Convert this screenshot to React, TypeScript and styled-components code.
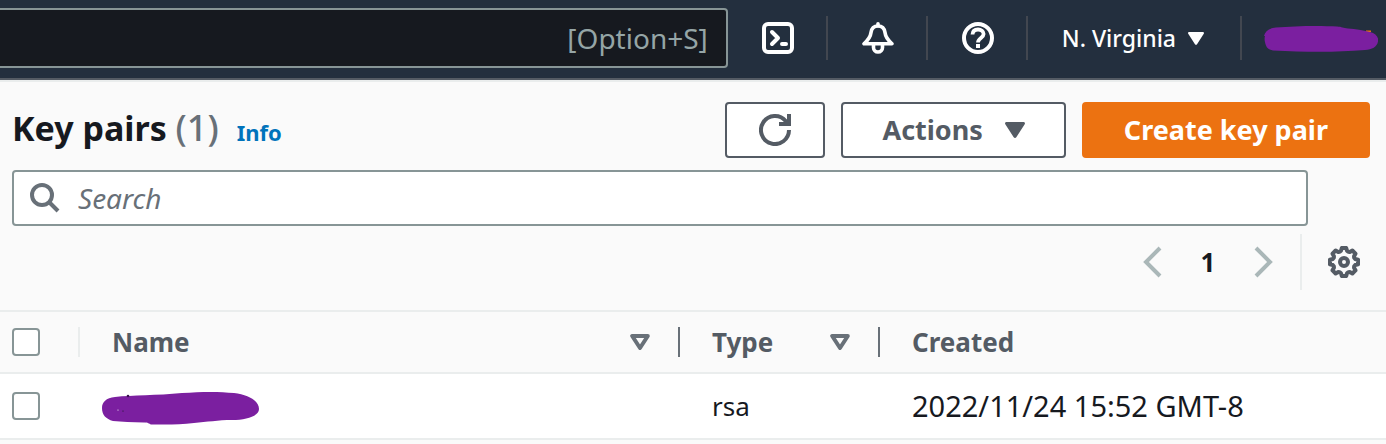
import React from "react";
import styled, { createGlobalStyle } from "styled-components";

const color = {
  ink: "#16191f",
  slate: "#545b64",
  grey: "#687078",
  line: "#879596",
  pale: "#aab7b8",
  rule: "#eaeded",
  navy: "#232f3e",
  page: "#fafafa",
  orange: "#ec7211",
  link: "#0073bb",
  mark: "#7b1fa0",
};

const GlobalStyle = createGlobalStyle`
  *, *::before, *::after { box-sizing: border-box; }
  body {
    margin: 0;
    background: ${color.page};
    color: ${color.ink};
    font-family: "Noto Sans", "Open Sans", sans-serif;
    font-size: 26px;
    line-height: 36px;
    overflow-x: hidden;
  }
  button, input { font: inherit; color: inherit; }
  button { cursor: pointer; }
  svg { display: block; flex: none; }
`;

const TopBar = styled.header`
  display: flex;
  align-items: center;
  height: 80px;
  background: ${color.navy};
  border-bottom: 2px solid ${color.slate};
  color: #fff;
`;

const GlobalSearch = styled.label`
  display: flex;
  flex: 1;
  align-items: center;
  min-width: 0;
  height: 60px;
  padding-right: 18px;
  margin-bottom: 2px;
  background: ${color.ink};
  border: 2px solid ${color.line};
  border-left: 0;
  border-radius: 0 4px 4px 0;
  color: #95a5a6;
  font-size: 28px;
`;

const GlobalInput = styled.input`
  flex: 1;
  min-width: 0;
  padding: 0;
  background: none;
  border: 0;
  outline: 0;
`;

const NavButton = styled.button<{ $kind?: "region" | "account" }>`
  display: flex;
  align-items: center;
  gap: 12px;
  height: 44px;
  margin-bottom: 2px;
  padding: 0 ${(p) => (p.$kind === "account" ? "8px 0 22px" : p.$kind === "region" ? "36px 0 34px" : "32px 0 34px")};
  background: none;
  border: 0;
  border-right: ${(p) => (p.$kind === "account" ? "0" : "2px solid #424750")};
  font-size: 23px;
  font-weight: 500;
  white-space: nowrap;
`;

const Panel = styled.main`
  border-top: 2px solid ${color.rule};
`;

const TitleRow = styled.div`
  display: flex;
  align-items: flex-start;
  justify-content: space-between;
  padding: 20px 16px 12px 12px;
`;

const Heading = styled.div`
  display: flex;
  align-items: baseline;
  gap: 18px;
`;

const Title = styled.h1`
  margin: 0;
  font-size: 34px;
  line-height: 52px;
  font-weight: 700;
`;

const Count = styled.span`
  color: ${color.grey};
  font-size: 36px;
  font-weight: 500;
`;

const InfoLink = styled.a`
  color: ${color.link};
  font-size: 22px;
  font-weight: 700;
  text-decoration: none;
`;

const Actions = styled.div`
  display: flex;
  gap: 16px;
`;

const Button = styled.button<{ $primary?: boolean; $pad?: number }>`
  display: flex;
  align-items: center;
  gap: 22px;
  height: 56px;
  padding: 0 ${(p) => p.$pad ?? 40}px;
  background: ${(p) => (p.$primary ? color.orange : "#fff")};
  border: 2px solid ${(p) => (p.$primary ? color.orange : color.slate)};
  border-radius: 4px;
  color: ${(p) => (p.$primary ? "#fff" : color.slate)};
  font-size: 27px;
  font-weight: 700;
  white-space: nowrap;
`;

const FilterBox = styled.label`
  display: flex;
  align-items: center;
  gap: 18px;
  height: 56px;
  margin: 0 78px 0 12px;
  padding: 0 16px;
  background: #fff;
  border: 2px solid ${color.line};
  border-radius: 4px;
  font-size: 28px;
`;

const FilterInput = styled.input`
  flex: 1;
  min-width: 0;
  padding: 0;
  background: none;
  border: 0;
  outline: 0;
  &::placeholder {
    color: ${color.grey};
    font-style: italic;
    opacity: 1;
  }
`;

const Pager = styled.nav`
  display: flex;
  align-items: center;
  justify-content: flex-end;
  height: 56px;
  margin: 8px 26px 20px 12px;
`;

const PageButton = styled.button<{ $current?: boolean }>`
  display: flex;
  align-items: center;
  justify-content: center;
  width: ${(p) => (p.$current ? 70 : 42)}px;
  padding: 0;
  background: none;
  border: 0;
  font-weight: 700;
`;

const SettingsButton = styled.button`
  display: flex;
  align-items: center;
  height: 56px;
  margin-left: 15px;
  padding: 0 0 0 26px;
  background: none;
  border: 0;
  border-left: 2px solid ${color.rule};
`;

const Table = styled.table`
  width: 100%;
  border-collapse: separate;
  border-spacing: 0;
  border-top: 2px solid ${color.rule};
  table-layout: fixed;
`;

const Column = styled.col<{ $width?: number }>`
  width: ${(p) => (p.$width ? `${p.$width}px` : "auto")};
`;

const HeadCell = styled.th`
  height: 62px;
  padding: 0;
  border-bottom: 2px solid ${color.rule};
  color: ${color.slate};
  text-align: left;
`;

const HeadInner = styled.div<{ $divider?: string; $pick?: boolean }>`
  display: flex;
  align-items: center;
  justify-content: space-between;
  height: 30px;
  padding: 0 28px 0 ${(p) => (p.$pick ? 12 : 32)}px;
  border-right: ${(p) => (p.$divider ? `2px solid ${p.$divider}` : "0")};
`;

const Cell = styled.td<{ $pick?: boolean; $date?: boolean }>`
  height: 66px;
  padding: 0 0 0 ${(p) => (p.$pick ? 12 : 32)}px;
  background: #fff;
  border-bottom: 2px solid ${color.rule};
  font-size: ${(p) => (p.$date ? 29 : 26)}px;
  white-space: nowrap;
`;

const CheckBox = styled.input`
  appearance: none;
  display: block;
  flex: none;
  width: 28px;
  height: 28px;
  margin: 0;
  background: #fff;
  border: 2px solid ${color.line};
  border-radius: 4px;
`;

const SortButton = styled.button`
  padding: 0;
  background: none;
  border: 0;
`;

const NameMark = styled.svg`
  margin-left: -10px;
`;

const Caret = ({ width = 20, height = 16 }: { width?: number; height?: number }) => (
  <svg width={width} height={height} viewBox="0 0 20 16" fill="currentColor" aria-hidden>
    <path d="M1.600 0h16.800c1.300 0 2 1.100 1.300 2.200L11.300 15.200c-.6 1-2 1-2.600 0L.3 2.200C-.4 1.100.3 0 1.600 0z" />
  </svg>
);

const SortIcon = () => (
  <svg width="20" height="16" viewBox="0 0 20 16" fill="none" stroke={color.grey} strokeWidth="4" strokeLinejoin="round" aria-hidden>
    <path d="M2.200 2h15.600L10 14z" />
  </svg>
);

const TerminalIcon = () => (
  <svg width="32" height="32" viewBox="0 0 32 32" fill="none" stroke="#fff" strokeWidth="4" strokeLinecap="round" strokeLinejoin="round" aria-hidden>
    <rect x="2" y="2" width="28" height="28" rx="4" />
    <path d="M10 10l6 6-6 6M20 22h4" />
  </svg>
);

const BellIcon = () => (
  <svg width="32" height="32" viewBox="0 0 32 32" fill="none" stroke="#fff" strokeWidth="3.600" strokeLinejoin="round" aria-hidden>
    <path d="M16 1.800v2" strokeLinecap="round" />
    <path d="M16 4c-4.500 0-6.500 2.800-7 6.500C8.500 15.500 6.200 18 2 21.800h28c-4.200-3.800-6.500-6.300-7-11.300-.5-3.700-2.500-6.500-7-6.500z" />
    <path d="M11.500 23v2.500a4.500 4.500 0 0 0 9 0V23" />
  </svg>
);

const HelpIcon = () => (
  <svg width="32" height="32" viewBox="0 0 32 32" fill="none" stroke="#fff" strokeWidth="4" aria-hidden>
    <circle cx="16" cy="16" r="14" />
    <path d="M10.500 12.500c.2-3.400 2.400-5 5.500-5s5.600 1.700 5.600 4.500c0 4-5.600 4-5.600 8.500" strokeWidth="3.800" />
    <path d="M14 22h4v4h-4z" fill="#fff" stroke="none" />
  </svg>
);

const RefreshIcon = () => (
  <svg width="32" height="32" viewBox="0 0 32 32" fill="none" stroke={color.slate} strokeWidth="4" aria-hidden>
    <path d="M30 16a14 14 0 1 1-3.300-9l3.300 3.600" />
    <path d="M30 0v10H20" />
  </svg>
);

const SearchIcon = () => (
  <svg width="30" height="30" viewBox="0 0 30 30" fill="none" stroke={color.grey} strokeWidth="4" aria-hidden>
    <circle cx="12" cy="12" r="10" />
    <path d="M19 19l9 9" />
  </svg>
);

const Chevron = ({ next }: { next?: boolean }) => (
  <svg width="20" height="32" viewBox="0 0 20 32" fill="none" stroke={color.pale} strokeWidth="4" aria-hidden>
    <path d={next ? "M2 2l14 14L2 30" : "M18 2L4 16l14 14"} />
  </svg>
);

const gearPath = (() => {
  const points: string[] = [];
  for (let tooth = 0; tooth < 8; tooth++) {
    for (const [offset, radius] of [[-9, 14.200], [9, 14.200], [15, 11.600], [22.500, 11], [30, 11.600]]) {
      const angle = ((tooth * 45 + offset) * Math.PI) / 180;
      points.push(`${(16 + radius * Math.sin(angle)).toFixed(2)} ${(16 - radius * Math.cos(angle)).toFixed(2)}`);
    }
  }
  return `M${points.join("L")}z`;
})();

const GearIcon = () => (
  <svg width="32" height="32" viewBox="0 0 32 32" fill="none" stroke={color.slate} strokeWidth="4" strokeLinejoin="round" aria-hidden>
    <path d={gearPath} />
    <circle cx="16" cy="16" r="4" />
  </svg>
);

const UserMark = () => (
  <svg width="114" height="28" viewBox="0 -2 114 28" aria-hidden>
    <path d="M102 4.500h5v1.500h-5z" fill={color.orange} />
    <path d="M0 10C1 5 5 2 12 1.500 30 0 55-.5 73 .5c5 .3 6 1.500 11 2 8 .8 14 1.500 22 3.500 6 1.500 9 5.500 8 9.500-1 5.500-6 8-13 8.500-30 2.500-60 2-92 .5-4-1-6-2-7-5-1-3-2-6-1-9.500z" fill={color.mark} />
  </svg>
);

export default function App() {
  return (
    <>
      <GlobalStyle />
      <TopBar>
        <GlobalSearch>
          <GlobalInput type="text" aria-label="Search services" />
          [Option+S]
        </GlobalSearch>
        <NavButton aria-label="CloudShell"><TerminalIcon /></NavButton>
        <NavButton aria-label="Notifications"><BellIcon /></NavButton>
        <NavButton aria-label="Help"><HelpIcon /></NavButton>
        <NavButton $kind="region">
          N. Virginia
          <Caret width={16} height={13} />
        </NavButton>
        <NavButton $kind="account" aria-label="Account"><UserMark /></NavButton>
      </TopBar>
      <Panel>
        <TitleRow>
          <Heading>
            <Title>Key pairs <Count>(1)</Count></Title>
            <InfoLink href="#info">Info</InfoLink>
          </Heading>
          <Actions>
            <Button $pad={32} aria-label="Refresh"><RefreshIcon /></Button>
            <Button $pad={39}>Actions <Caret /></Button>
            <Button $primary>Create key pair</Button>
          </Actions>
        </TitleRow>
        <FilterBox>
          <SearchIcon />
          <FilterInput type="text" placeholder="Search" aria-label="Search key pairs" />
        </FilterBox>
        <Pager aria-label="Pagination">
          <PageButton aria-label="Previous page"><Chevron /></PageButton>
          <PageButton $current aria-current="page">1</PageButton>
          <PageButton aria-label="Next page"><Chevron next /></PageButton>
          <SettingsButton aria-label="Preferences"><GearIcon /></SettingsButton>
        </Pager>
        <Table>
          <colgroup>
            <Column $width={80} />
            <Column $width={600} />
            <Column $width={200} />
            <Column />
          </colgroup>
          <thead>
            <tr>
              <HeadCell>
                <HeadInner $pick $divider={color.rule}>
                  <CheckBox type="checkbox" aria-label="Select all" />
                </HeadInner>
              </HeadCell>
              <HeadCell>
                <HeadInner $divider={color.grey}>
                  Name
                  <SortButton aria-label="Sort by name"><SortIcon /></SortButton>
                </HeadInner>
              </HeadCell>
              <HeadCell>
                <HeadInner $divider={color.grey}>
                  Type
                  <SortButton aria-label="Sort by type"><SortIcon /></SortButton>
                </HeadInner>
              </HeadCell>
              <HeadCell>
                <HeadInner>Created</HeadInner>
              </HeadCell>
            </tr>
          </thead>
          <tbody>
            <tr>
              <Cell $pick><CheckBox type="checkbox" aria-label="Select key pair" /></Cell>
              <Cell>
                <NameMark width="158" height="38" viewBox="0 -5 158 38" aria-hidden>
                  <path d="M0 16C0 10 4 6 13 5 30 3 55 3.500 80 1c20-1.500 38-1.500 52 0 15 2 25 8 25 16 0 7-12 11-27 11-14 0-25 2-38 3-15 2-30 1.500-43 1.500-2-1-3-2-7-2C30 30 20 30 11 29 4 27 0 23 0 16z" fill={color.mark} />
                  <circle cx="26" cy="4" r="1.300" fill="#3b1150" />
                  <circle cx="16" cy="18" r=".6" fill="#fff" />
                  <circle cx="21" cy="19" r=".6" fill={color.ink} />
                </NameMark>
              </Cell>
              <Cell>rsa</Cell>
              <Cell $date>2022/11/24 15:52 GMT-8</Cell>
            </tr>
          </tbody>
        </Table>
      </Panel>
    </>
  );
}
